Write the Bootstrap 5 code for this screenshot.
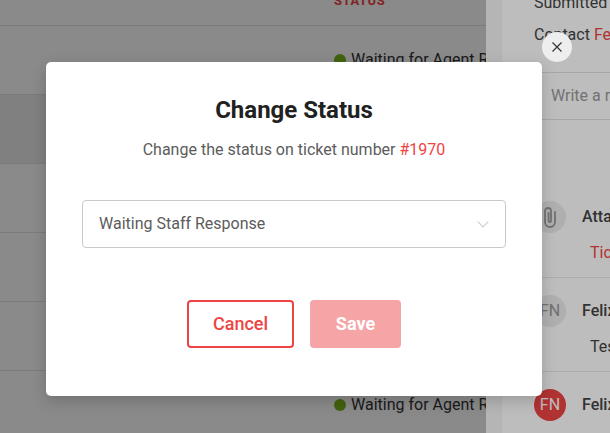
<!DOCTYPE html>
<html lang="en">
<head>
<meta charset="utf-8">
<title>Change Status</title>
<link rel="stylesheet" href="https://cdn.jsdelivr.net/npm/bootstrap@5.3.0/dist/css/bootstrap.min.css">
<style>
html,body{height:433px;overflow:hidden}
body{font-family:Roboto,"Liberation Sans",sans-serif;background:#fff;color:#333}
.stage{height:433px;overflow:hidden}
.tickets{width:486px;flex:none;overflow:hidden;background:#fff}
.thead-row{height:26px;padding-left:334px;border-bottom:1px solid #e3e3e3;display:flex;align-items:flex-end;padding-bottom:17px}
.thead-row span{font-size:13px;font-weight:700;letter-spacing:.55px;color:#ef4444;line-height:14px}
.t-row{height:69px;border-bottom:1px solid #e3e3e3;padding-left:334px;white-space:nowrap;font-size:16px;color:#333;gap:5px}
.t-row.hl{background:#ececec}
.dot{width:12px;height:12px;border-radius:50%;background:#7ab51d;flex:none}
.side{width:124px;flex:none;background:#f4f4f4;overflow:hidden;white-space:nowrap}
.side-in{margin-left:15px;height:433px;background:#fff;border-left:1px solid #f0f0f0;font-size:16px;color:#444}
.meta{height:73px;padding-left:32px;border-bottom:1px solid #e0e0e0}
.meta p{margin:0;line-height:20px;position:relative;top:-7px;height:32px}
.reply{height:47px;padding-left:49px;border-bottom:1px solid #e0e0e0;color:#9a9a9a;line-height:46px}
.act{border-bottom:1px solid #e8e8e8;padding-left:32px;height:94px;padding-top:17px}
.act.first{height:158px;padding-top:81px}
.act.third{border-bottom:0}
.ava{width:32px;height:32px;border-radius:50%;background:#ececec;color:#999;font-size:16px;flex:none}
.ava.red{background:#ef4444;color:#fff}
.who{font-weight:500;margin-left:16px;color:#444}
.body-line{margin:11px 0 0 56px;line-height:18px}
.rd{color:#ef4444}
.scrim-a{position:absolute;left:0;top:0;width:486px;height:433px;background:rgba(0,0,0,.46)}
.scrim-b{position:absolute;left:486px;top:0;width:124px;height:433px;background:rgba(0,0,0,.26)}
.dialog-box{position:absolute;left:46px;top:62px;width:496px;height:334px;background:#fff;border-radius:5px;box-shadow:0 5px 15px rgba(0,0,0,.18);padding:34px 36px 0;text-align:center}
.dialog-box h2{font-size:24px;font-weight:700;color:#212121;line-height:28px;margin:0}
.lede{font-size:16px;color:#5c5c5c;line-height:20px;margin:16px 0 0}
.picker{margin-top:40px;height:48px;border:1px solid #c9c9c9;border-radius:4px;padding:0 16px;font-size:16px;color:#5c5c5c}
.btn-row{margin-top:52px;gap:16px}
.b-cancel,.b-save{height:48px;font-size:18px;font-weight:700;border-radius:4px;line-height:1;padding:0;font-family:Roboto,sans-serif}
.b-cancel{width:107px;background:#fff;border:2px solid #ef4444;color:#ef4444;font-weight:500}
.b-save{width:91px;background:#f5a5a5;border:0;color:#fff}
.b-cancel:hover{background:#fff;color:#ef4444;border-color:#ef4444}
.b-save:hover{background:#f5a5a5;color:#fff}
.x-btn{position:absolute;left:542px;top:32px;width:30px;height:30px;border-radius:50%;background:#eee;border:0;padding:0}
</style>
</head>
<body>
<div class="stage d-flex position-relative">
  <div class="tickets">
    <div class="thead-row"><span>STATUS</span></div>
    <div class="t-row d-flex align-items-center"><i class="dot"></i><span>Waiting for Agent Response</span></div>
    <div class="t-row hl"></div>
    <div class="t-row"></div>
    <div class="t-row"></div>
    <div class="t-row"></div>
    <div class="t-row d-flex align-items-center"><i class="dot"></i><span>Waiting for Agent Response</span></div>
  </div>
  <div class="side">
    <div class="side-in">
      <div class="meta"><p>Submitted</p><p>Contact <span class="rd">Felix</span></p></div>
      <div class="reply">Write a reply</div>
      <div class="act first">
        <div class="d-flex align-items-center">
          <span class="ava d-flex align-items-center justify-content-center">
            <svg width="18" height="22" viewBox="0 0 18 22" fill="none" stroke="#999" stroke-width="1.8" stroke-linecap="round"><path d="M14 6v10a5 5 0 0 1-10 0V5a3 3 0 0 1 6 0v10a1.2 1.2 0 0 1-2.4 0V7"/></svg>
          </span>
          <span class="who">Attachment</span>
        </div>
        <div class="body-line rd">Ticket</div>
      </div>
      <div class="act">
        <div class="d-flex align-items-center">
          <span class="ava d-flex align-items-center justify-content-center">FN</span>
          <span class="who">Felix</span>
        </div>
        <div class="body-line">Test</div>
      </div>
      <div class="act third">
        <div class="d-flex align-items-center">
          <span class="ava red d-flex align-items-center justify-content-center">FN</span>
          <span class="who">Felix</span>
        </div>
      </div>
    </div>
  </div>
  <div class="scrim-a"></div>
  <div class="scrim-b"></div>
  <div class="dialog-box">
    <h2>Change Status</h2>
    <p class="lede">Change the status on ticket number <span class="rd">#1970</span></p>
    <div class="picker d-flex align-items-center justify-content-between">
      <span>Waiting Staff Response</span>
      <svg width="12" height="7" viewBox="0 0 12 7" fill="none" stroke="#cfcfcf" stroke-width="1.2"><path d="M.7.7 6 6l5.3-5.3"/></svg>
    </div>
    <div class="btn-row d-flex justify-content-center">
      <button class="btn b-cancel" type="button">Cancel</button>
      <button class="btn b-save" type="button">Save</button>
    </div>
  </div>
  <button class="x-btn d-flex align-items-center justify-content-center" type="button" aria-label="Close">
    <svg width="12" height="12" viewBox="0 0 12 12" fill="none" stroke="#333" stroke-width="1.2"><path d="M1.5 1.5l9 9M10.5 1.5l-9 9"/></svg>
  </button>
</div>
</body>
</html>
